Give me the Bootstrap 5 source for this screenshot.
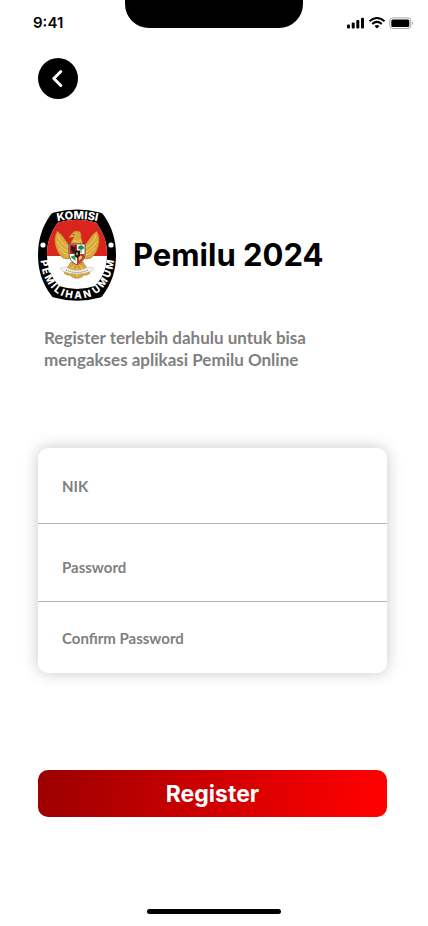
<!DOCTYPE html>
<html lang="id">
<head>
<meta charset="utf-8">
<meta name="viewport" content="width=device-width, initial-scale=1">
<title>Pemilu 2024 - Register</title>
<link href="https://cdn.jsdelivr.net/npm/bootstrap@5.3.0/dist/css/bootstrap.min.css" rel="stylesheet">
<style>
  body { font-family: Lato, "Open Sans", sans-serif; background: #fff; color: #000; }
  .status-bar { height: 46px; padding: 0 15px 0 14px; }
  .clock { padding-left: 19px; font: 600 15px/20px Inter, sans-serif; }
  .notch { width: 178px; height: 28px; background: #000; border-radius: 0 0 24px 24px; }
  .status-side { flex: 1 1 0; }
  .page-body { padding: 12px 41px 0 38px; }
  .btn-back { width: 40px; height: 41px; background: #000; }
  .btn-back:hover { background: #333; }
  .brand { margin-top: 105px; gap: 11px; }
  .brand-title { font: 700 31px/40px Inter, sans-serif; }
  .intro { margin-top: 21px; padding-left: 6px; font-size: 17px; line-height: 22px; font-weight: 700; color: #808080; }
  .field-card { margin-top: 77px; border-radius: 10px; box-shadow: 0 0 16px rgba(0, 0, 0, .22); }
  .field-row { height: 75px; padding: 0 24px; gap: 12px; }
  .field-row label { font-size: 15px; line-height: 20px; font-weight: 700; color: #808080; }
  .field-row .form-control { font-size: 15px; color: #333; }
  .field-row + .field-row { border-top: 1px solid #b3b3b3; }
  .field-middle { height: 78px; padding-top: 8px; }
  .field-last { height: 72px; }
  .btn-register { margin-top: 97px; height: 47px; border-radius: 10px; color: #fff; font: 700 23px/28px Inter, sans-serif; background: linear-gradient(98deg, #9b0000, #f00 96%); }
  .btn-register:hover { color: #fff; }
  .home-bar { width: 134px; height: 5px; margin-bottom: 12px; background: #000; }
  .emblem-top { font: 800 11px Inter, sans-serif; fill: #fff; }
  .emblem-bottom { font: 800 10px Inter, sans-serif; fill: #fff; }
</style>
</head>
<body>
<div class="min-vh-100 d-flex flex-column">
  <header class="status-bar d-flex align-items-center">
    <div class="status-side"><div class="clock">9:41</div></div>
    <div class="notch align-self-start"></div>
    <div class="status-side d-flex justify-content-end">
      <svg width="67" height="12" viewBox="0 0 67 12" aria-label="Signal, Wi-Fi, battery">
        <g>
          <rect x="1" y="7.5" width="3" height="4" rx="1"/>
          <rect x="5.7" y="5.5" width="3" height="6" rx="1"/>
          <rect x="10.3" y="3" width="3" height="8.500" rx="1"/>
          <rect x="15" y=".7" width="3" height="10.800" rx="1"/>
        </g>
        <g fill="none" stroke="#000" stroke-width="2">
          <path d="M23.500 4.200Q31 -2.200 38.500 4.200"/>
          <path d="M26.200 7Q31 2.800 35.800 7"/>
        </g>
        <path d="M28.500 9Q31 7 33.500 9L31 11.600Z"/>
        <rect x="43.800" y=".9" width="21" height="10.600" rx="3" fill="none" stroke="#a6a6a6"/>
        <rect x="45.300" y="2.400" width="18" height="7.600" rx="1.500"/>
        <path d="M66 4.300q1.600 1.800 0 3.600z" fill="#999"/>
      </svg>
    </div>
  </header>

  <main class="page-body">
    <button type="button" class="btn-back btn rounded-circle border-0 p-0 d-flex align-items-center justify-content-center" aria-label="Kembali">
      <svg width="40" height="41" viewBox="0 0 40 41" fill="none" stroke="#fff" stroke-width="3" stroke-linecap="round" stroke-linejoin="round"><path d="M22.800 13.500L15.800 20.500L22.800 27.500"/></svg>
    </button>

    <div class="brand d-flex align-items-center">
      <svg width="84" height="102" viewBox="6 0 84 102" role="img" aria-label="Komisi Pemilihan Umum">
        <defs>
          <clipPath id="inner"><path d="M26 18.500Q45 13 64 18.500C71 28 75 38 75 50C75 64 71 73 63 82Q45 88 27 82C19 73 15 64 15 50C15 38 19 28 26 18.500Z"/></clipPath>
          <path id="arcTop" d="M21 18.500Q45.500 11.500 70 18.500"/>
          <path id="arcBottom" d="M8.500 55C9.500 70 15 80 22 87C29 93 37 94.500 45.500 94.500C54 94.500 61 93 68 87C75 80 81 70 82 55"/>
        </defs>
        <path d="M22 8.500Q45 2.500 68 8.500Q70.500 9 72 11.500C80 23 84 36 84 51C84 66 80 79 71 91Q70 93 68 93.500Q45 100 22 93.500Q20 93 19 91C10 79 6 66 6 51C6 36 10 23 18 11.500Q19.500 9 22 8.500Z"/>
        <g clip-path="url(#inner)">
          <rect x="10" y="5" width="70" height="90" fill="#fff"/>
          <rect x="10" y="5" width="70" height="47" fill="#dc241f"/>
        </g>
        <circle cx="11" cy="41" r="2.600" fill="#fff"/>
        <circle cx="79" cy="41" r="2.600" fill="#fff"/>
        <text class="emblem-top"><textPath href="#arcTop" startOffset="50%" text-anchor="middle">KOMISI</textPath></text>
        <text class="emblem-bottom"><textPath href="#arcBottom" startOffset="1%">P E M I L I H A N</textPath></text>
        <text class="emblem-bottom"><textPath href="#arcBottom" startOffset="99%" text-anchor="end">U M U M</textPath></text>
        <g fill="#dba83c" stroke="#9a6a18" stroke-width=".5">
          <path d="M25 27Q21.500 34 23.500 42Q25.500 50 31 54Q35 56 39 54L43 44Q37 42 34 37Q30 30 25 27Z"/>
          <path d="M65 27Q68.500 34 66.500 42Q64.500 50 59 54Q55 56 51 54L47 44Q53 42 56 37Q60 30 65 27Z"/>
          <path d="M39 58L32 69Q35 72 38 71Q41 75 45 74Q49 75 52 71Q55 72 58 69L51 58Z"/>
          <path d="M40 29.500Q42 26 46 27Q50 28 49 33L51 40L49 61L45 65L41 61L38 40L42 33L37 34Q37.500 31 40 29.500Z"/>
        </g>
        <g fill="none" stroke="#f2d06c" stroke-width=".9">
          <path d="M26 31Q28 39 37 44M25 37Q29 45 37 48M27 44Q31 50 38 52M64 31Q62 39 53 44M65 37Q61 45 53 48M63 44Q59 50 52 52"/>
          <path d="M42 61L37 70M45 63V73M48 61L53 70M41 36L46 38L49 36"/>
        </g>
        <circle cx="41.500" cy="30.500" r=".6" fill="#432500"/>
        <path d="M37 40H53V50Q53 57 45 61Q37 57 37 50Z" fill="#fff" stroke="#222" stroke-width=".7"/>
        <path d="M37.400 40.400H45V50H37.400Z" fill="#c82020"/>
        <path d="M45 50H52.600Q52.500 56.500 45 60.500Z" fill="#d92823"/>
        <path d="M39 42L44 43L43 47L44 49H41L39 46Z" fill="#222"/>
        <path d="M46 43Q49 39.500 52 43Q52 46 49.500 45.500V49H48.500V45.500Q46 46 46 43Z" fill="#25864a"/>
        <path d="M38.500 53Q41 51 43.500 52.500V57Z" fill="#3f9254"/>
        <path d="M47 52Q51 51 50 54L47 57Z" fill="#f2cc5c"/>
        <path d="M42.500 46.500H48V52L45 54L42.500 52Z" fill="#181818"/>
        <path d="M45 48L46 50L45 51.500L44 50Z" fill="#f4ce49"/>
        <path d="M28 64L34 63Q44 70 56 63L62 64L60 67Q45 73 30 67Z" fill="#f4f2ec" stroke="#bbb" stroke-width=".5"/>
        <path d="M34 66Q45 71 56 66" fill="none" stroke="#666" stroke-dasharray="1 1"/>
      </svg>
      <h1 class="brand-title mb-0">Pemilu 2024</h1>
    </div>

    <p class="intro mb-0">Register terlebih dahulu untuk bisa<br>mengakses aplikasi Pemilu Online</p>

    <form>
      <div class="field-card bg-white">
        <div class="field-row d-flex align-items-center">
          <label class="text-nowrap" for="nik">NIK</label>
          <input id="nik" type="text" class="form-control form-control-plaintext border-0 shadow-none">
        </div>
        <div class="field-row field-middle d-flex align-items-center">
          <label class="text-nowrap" for="password">Password</label>
          <input id="password" type="password" class="form-control form-control-plaintext border-0 shadow-none">
        </div>
        <div class="field-row field-last d-flex align-items-center">
          <label class="text-nowrap" for="confirm">Confirm Password</label>
          <input id="confirm" type="password" class="form-control form-control-plaintext border-0 shadow-none">
        </div>
      </div>
      <button type="submit" class="btn btn-register border-0 w-100 p-0">Register</button>
    </form>
  </main>

  <div class="home-bar rounded-pill mx-auto mt-auto"></div>
</div>
<script src="https://cdn.jsdelivr.net/npm/bootstrap@5.3.0/dist/js/bootstrap.bundle.min.js"></script>
</body>
</html>
